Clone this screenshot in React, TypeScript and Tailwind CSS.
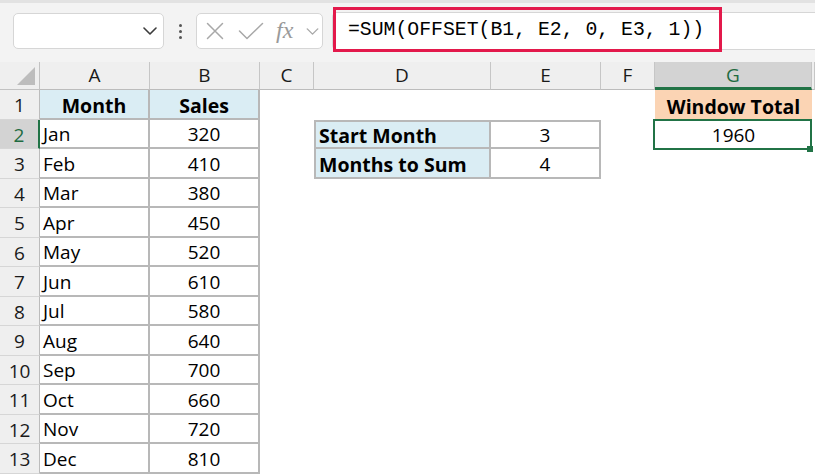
import React from "react";

const months = ["Jan","Feb","Mar","Apr","May","Jun","Jul","Aug","Sep","Oct","Nov","Dec"];
const sales = [320,410,380,450,520,610,580,640,700,660,720,810];
const colLetters = ["A","B","C","D","E","F","G",""];

const tb = "border-[#b8b8b8]";

function Chevron({ color = "#444", w = 14, h = 8 }: { color?: string; w?: number; h?: number }) {
  return (
    <svg width={w} height={h} viewBox="0 0 14 8" fill="none">
      <path d="M1 1 L7 7 L13 1" stroke={color} strokeWidth="1.6" strokeLinecap="round" strokeLinejoin="round" />
    </svg>
  );
}

function Toolbar() {
  return (
    <div className="relative h-[62px] bg-[#f3f3f3] border-t-[3px] border-[#e2e2e2] flex items-start pt-[10px] pl-[13px]">
      <div className="w-[151px] h-[36px] bg-white border border-[#d6d6d6] rounded-[5px] flex items-center justify-end pr-[6px]">
        <Chevron color="#3c3c3c" />
      </div>
      <div className="w-[32px] h-[36px] flex flex-col items-center justify-center gap-[3px]">
        <div className="w-[3px] h-[3px] rounded-full bg-[#555]" />
        <div className="w-[3px] h-[3px] rounded-full bg-[#555]" />
        <div className="w-[3px] h-[3px] rounded-full bg-[#555]" />
      </div>
      <div className="w-[127px] h-[36px] bg-white border border-[#d6d6d6] rounded-[5px] flex items-center pl-[9px]">
        <svg width="18" height="18" viewBox="0 0 18 18" fill="none">
          <path d="M1.5 1.5 L16.5 16.5 M16.5 1.5 L1.5 16.5" stroke="#a8a8a8" strokeWidth="1.5" strokeLinecap="round" />
        </svg>
        <svg className="ml-[14px]" width="26" height="18" viewBox="0 0 26 18" fill="none">
          <path d="M1.5 9 L9 16.5 L24.5 1.5" stroke="#a8a8a8" strokeWidth="1.5" strokeLinecap="round" strokeLinejoin="round" />
        </svg>
        <span className="ml-[12px] w-[25px] font-['Liberation_Serif',serif] italic text-[24px] leading-none text-[#9a9a9a] -mt-[3px]">fx</span>
        <span className="ml-[5px] flex items-center">
          <Chevron color="#a8a8a8" w={13} h={7} />
        </span>
      </div>
      <div className="ml-[9px] -mt-[1px] flex-1 h-[38px] bg-white border-y border-l border-[#d6d6d6] rounded-l-[5px] flex items-center pl-[15px]">
        <span className="font-['Liberation_Mono',monospace] text-[19.8px] text-black leading-none whitespace-pre">
          =SUM(OFFSET(B1, E2, 0, E3, 1))
        </span>
      </div>
      <div className="absolute left-[333px] top-[4px] w-[389px] h-[45px] border-[3px] border-[#e3194b]" />
    </div>
  );
}

function Sheet() {
  const cells: React.ReactNode[] = [];

  cells.push(
    <div key="corner" className="relative bg-[#efefef] border-r border-b border-[#c2c2c2]">
      <svg className="absolute left-0 top-0" width="40" height="28" viewBox="0 0 40 28">
        <polygon points="17,23 35,23 35,5" fill="#bdbdbd" />
      </svg>
    </div>
  );
  colLetters.forEach((l, i) => {
    const isG = l === "G";
    cells.push(
      <div
        key={"h" + i}
        className={
          isG
            ? "bg-[#d3d3d3] border-r border-r-[#c6c6c6] border-b-[3px] border-b-[#217346] flex items-center justify-center text-[19px] text-[#1f6b41] pt-[2px]"
            : "bg-[#efefef] border-r border-r-[#c6c6c6] border-b border-b-[#bcbcbc] flex items-center justify-center text-[19px] text-[#1a1a1a]"
        }
      >
        {l}
      </div>
    );
  });

  for (let r = 1; r <= 13; r++) {
    const sel = r === 2;
    cells.push(
      <div
        key={"r" + r}
        className={
          sel
            ? "bg-[#d3d3d3] border-r-2 border-r-[#217346] border-b border-b-[#d6d6d6] flex items-center justify-center pt-[3px] text-[19px] text-[#1f6b41]"
            : "bg-[#efefef] border-r border-r-[#bcbcbc] border-b border-b-[#d6d6d6] flex items-center justify-center pt-[3px] text-[19px] text-[#1a1a1a]"
        }
      >
        {r}
      </div>
    );

    if (r === 1) {
      cells.push(
        <div key={"a" + r} className={`bg-[#daedf4] border-r-2 border-b-2 ${tb} flex items-center justify-center pt-[3px] font-bold text-[19.5px]`}>
          Month
        </div>
      );
      cells.push(
        <div key={"b" + r} className={`bg-[#daedf4] border-r-2 border-b-2 ${tb} flex items-center justify-center pt-[3px] font-bold text-[19.5px]`}>
          Sales
        </div>
      );
    } else {
      cells.push(
        <div key={"a" + r} className={`bg-white border-r-2 border-b-2 ${tb} flex items-center pl-[3px] pt-[3px] text-[19px]`}>
          {months[r - 2]}
        </div>
      );
      cells.push(
        <div key={"b" + r} className={`bg-white border-r-2 border-b-2 ${tb} flex items-center justify-center pt-[3px] text-[19px]`}>
          {sales[r - 2]}
        </div>
      );
    }

    cells.push(<div key={"c" + r} className="bg-white" />);

    if (r === 2 || r === 3) {
      cells.push(
        <div
          key={"d" + r}
          className={`bg-[#daedf4] border-l-2 border-r-2 border-b-2 ${r === 2 ? "border-t-2" : ""} ${tb} flex items-center pl-[3px] pt-[3px] font-bold text-[19.5px]`}
        >
          {r === 2 ? "Start Month" : "Months to Sum"}
        </div>
      );
      cells.push(
        <div
          key={"e" + r}
          className={`bg-white border-r-2 border-b-2 ${r === 2 ? "border-t-2" : ""} ${tb} flex items-center justify-center pt-[3px] text-[19px]`}
        >
          {r === 2 ? "3" : "4"}
        </div>
      );
    } else {
      cells.push(<div key={"d" + r} className="bg-white" />);
      cells.push(<div key={"e" + r} className="bg-white" />);
    }

    cells.push(<div key={"f" + r} className="bg-white" />);

    if (r === 1) {
      cells.push(
        <div key={"g" + r} className="bg-[#fbd4b4] flex items-center justify-center pt-[3px] font-bold text-[19.5px]">
          Window Total
        </div>
      );
    } else if (r === 2) {
      cells.push(
        <div key={"g" + r} className="relative bg-white flex items-center justify-center pt-[3px] text-[19px]">
          1960
          <div className="absolute -left-[2px] right-0 -top-[1px] -bottom-[1px] border-2 border-[#217346]" />
          <div className="absolute -right-[1px] -bottom-[3px] w-[6px] h-[6px] bg-[#217346]" />
        </div>
      );
    } else {
      cells.push(<div key={"g" + r} className="bg-white" />);
    }

    cells.push(<div key={"hh" + r} className="bg-white" />);
  }

  return (
    <div className="grid grid-cols-[40px_110px_110px_54px_177px_110px_54px_157px_1fr] grid-rows-[28px_repeat(13,29.5px)] leading-none">
      {cells}
    </div>
  );
}

export default function App() {
  return (
    <div className="w-[815px] h-[475px] overflow-hidden bg-white font-['Open_Sans',sans-serif] text-black">
      <Toolbar />
      <Sheet />
    </div>
  );
}
